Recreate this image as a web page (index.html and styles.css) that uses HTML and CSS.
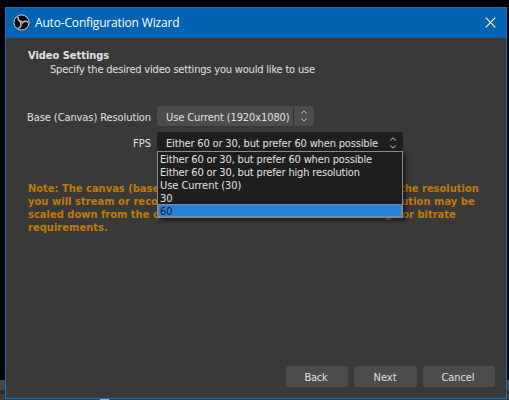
FILE: index.html
```
<!DOCTYPE html>
<html lang="en">
<head>
<meta charset="utf-8">
<title>Auto-Configuration Wizard</title>
<link rel="stylesheet" href="styles.css">
</head>
<body>
<div class="backdrop"><div class="backdrop-mark"></div></div>
<main class="window">
  <header class="titlebar">
    <svg class="logo" width="17" height="17" viewBox="0 0 17 17">
      <circle cx="8.5" cy="8.5" r="7.6" fill="#0b0909" stroke="#d5d5d5" stroke-width="1"/>
      <g fill="none" stroke="#c4c4c4" stroke-width="1.5" stroke-linecap="round">
        <path d="M5.1 3.2C4.7 5.5 6.2 7.4 8.7 7.6"/>
        <path d="M5.1 3.2C4.7 5.5 6.2 7.4 8.7 7.6" transform="rotate(120 8.5 8.5)"/>
        <path d="M5.1 3.2C4.7 5.5 6.2 7.4 8.7 7.6" transform="rotate(240 8.5 8.5)"/>
      </g>
    </svg>
    <h1 class="title">Auto-Configuration Wizard</h1>
    <svg class="close" width="11" height="11" viewBox="0 0 11 11"><path d="M.7.7l9.6 9.6M10.3.7L.7 10.3" stroke="#fff" stroke-width="1.2"/></svg>
  </header>
  <section class="heading">
    <h2 class="heading-title">Video Settings</h2>
    <p class="heading-text">Specify the desired video settings you would like to use</p>
  </section>
  <section class="form">
    <label class="label label-resolution">Base (Canvas) Resolution</label>
    <div class="combo combo-resolution">
      <span class="value value-resolution">Use Current (1920x1080)</span>
      <span class="arrows"><svg width="8" height="12" viewBox="0 0 8 12"><path d="M1 3.7L4 .9l3 2.8M1 8.3l3 2.8 3-2.8" fill="none" stroke="#bcbcbc"/></svg></span>
    </div>
    <label class="label label-fps">FPS</label>
    <div class="combo combo-fps">
      <span class="value value-fps">Either 60 or 30, but prefer 60 when possible</span>
      <svg class="fps-arrows" width="8" height="12" viewBox="0 0 8 12"><path d="M1 3.7L4 .9l3 2.8M1 8.3l3 2.8 3-2.8" fill="none" stroke="#bcbcbc"/></svg>
      <ul class="menu">
        <li>Either 60 or 30, but prefer 60 when possible</li>
        <li>Either 60 or 30, but prefer high resolution</li>
        <li class="current">Use Current (30)</li>
        <li>30</li>
        <li class="selected">60</li>
      </ul>
    </div>
  </section>
  <p class="note">
    <span class="note-a">Note: The canvas (base) resolution is not necessarily the same as the resolution</span>
    <span class="note-b">you will stream or record with. Your actual stream/recording resolution may be</span>
    <span class="note-c">scaled down from the canvas resolution to reduce resource usage or bitrate</span>
    <span class="note-d">requirements.</span>
  </p>
  <footer class="actions">
    <button class="button back">Back</button>
    <button class="button next">Next</button>
    <button class="button cancel">Cancel</button>
  </footer>
</main>
</body>
</html>
```
FILE: styles.css
```
* { box-sizing: border-box; margin: 0; padding: 0; }
body {
  width: 509px;
  height: 400px;
  padding: 7px 0 0 5px;
  overflow: hidden;
  background: #000;
  color: #e1e0e1;
  font: 11px/13px "DejaVu Sans Condensed", "Noto Sans", sans-serif;
}
.backdrop {
  position: absolute;
  inset: 380px 0 0;
  z-index: -1;
  background: linear-gradient(#464646 10px, #2b2b2b 10px 14px, #3a3a3a 14px);
}
.backdrop-mark { width: 9px; height: 1px; margin: 19px 0 0 100px; background: #a9b4be; }
.window {
  display: flex;
  flex-direction: column;
  width: 502px;
  height: 392px;
  border: 1px solid #1470bd;
  background: #3a393a;
}
.titlebar {
  display: flex;
  align-items: center;
  height: 30px;
  padding: 0 10px 0 7px;
  background: #0063b1;
}
.logo { margin: -2px 5px 0 0; }
.close { margin-top: -1px; }
.title { flex: 1; color: #fff; font: 12px/16px "Open Sans", sans-serif; letter-spacing: -.17px; white-space: nowrap; }
.heading { height: 68px; padding: 11px 0 0 22px; white-space: nowrap; }
.heading-title { font-size: 11px; line-height: 14px; letter-spacing: -.03px; }
.heading-text { padding-left: 22px; line-height: 14px; letter-spacing: -.19px; }
.form {
  display: grid;
  grid-template-columns: 124px max-content;
  grid-template-rows: 20px 20px;
  gap: 6px 6px;
  align-items: center;
  padding-left: 21px;
}
.label { justify-self: end; padding-top: 2px; white-space: nowrap; }
.label-resolution { letter-spacing: -.09px; }
.combo {
  position: relative;
  display: flex;
  align-items: center;
  height: 20px;
  padding-left: 9px;
  border-radius: 3px;
  background: #4c4c4c;
  white-space: nowrap;
}
.combo-resolution { width: 157px; }
.value { flex: 1; padding-top: 2px; }
.value-resolution { letter-spacing: -.1px; }
.value-fps { letter-spacing: -.16px; }
.arrows {
  display: flex;
  justify-content: center;
  align-items: center;
  width: 21px;
  height: 20px;
  border-left: 1px solid #333;
}
.combo-fps { width: 246px; padding-right: 6px; background: #1f1f1f; }
.fps-arrows { margin-top: 2px; }
.menu {
  position: absolute;
  top: 19px;
  left: 0;
  width: 246px;
  height: 67px;
  border: 1px solid #858b93;
  background: #1f1e1f;
  box-shadow: 3px 3px 4px rgba(0, 0, 0, .5);
  list-style: none;
}
.menu li { height: 13px; padding-left: 2px; line-height: 15px; letter-spacing: -.16px; }
.menu .current { letter-spacing: -.05px; }
.menu .selected { background: #2a82da; outline: 1px dotted #cb8a4a; outline-offset: -1px; color: #101820; }
.note { height: 52px; margin: 30px 0 0 22px; color: #c07b05; font-weight: bold; white-space: nowrap; }
.note span { display: block; }
.note-a { letter-spacing: .015px; }
.note-b { letter-spacing: .06px; }
.note-c { letter-spacing: .03px; }
.note-d { letter-spacing: .05px; }
.actions { display: flex; gap: 6px; margin: auto 11px 11px auto; }
.button {
  height: 21px;
  padding-top: 2px;
  border: 0;
  border-radius: 3px;
  background: #4c4c4c;
  color: #e1e0e1;
  font: inherit;
}
.back { width: 62px; padding-right: 2px; letter-spacing: -.2px; }
.next { width: 63px; padding-right: 1px; }
.cancel { width: 72px; padding-right: 2px; letter-spacing: -.1px; }
```
